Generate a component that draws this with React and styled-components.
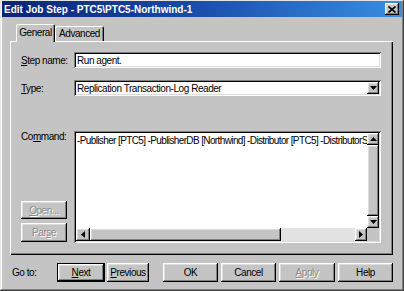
import styled, { createGlobalStyle } from "styled-components";

const Global = createGlobalStyle`
  html, body { margin: 0; padding: 0; background: #c4c4c4; }
  body { font-family: "Liberation Sans", Arial, sans-serif; }
`;

const face = "#c4c4c4";

const raised = `
  box-shadow: inset -1px -1px #000, inset 1px 1px #fff, inset -2px -2px #808080, inset 2px 2px #dcdcdc;
`;
const sunken = `
  box-shadow: inset 1px 1px #808080, inset -1px -1px #fff, inset 2px 2px #000, inset -2px -2px #dcdcdc;
`;

const Window = styled.div`
  width: 404px;
  height: 291px;
  box-sizing: border-box;
  padding: 1px 2px 2px 2px;
  background: ${face};
  box-shadow: inset -1px -1px #404040, inset 1px 1px #e4e4e4, inset -2px -2px #808080, inset 2px 2px #fff;
  display: flex;
  flex-direction: column;
  font-family: "Liberation Sans", Arial, sans-serif;
  font-size: 10px;
  letter-spacing: -0.45px;
  color: #000;
`;

const TitleBar = styled.div`
  height: 16px;
  display: flex;
  align-items: center;
  padding: 0 3px 0 2px;
  background: linear-gradient(90deg, #0a2470 0%, #1749a6 45%, #3a8ee2 100%);
  color: #fff;
  font-weight: bold;
  font-size: 10px;
  letter-spacing: 0;
  white-space: nowrap;
`;

const CloseBtn = styled.div`
  margin-left: auto;
  width: 14px;
  height: 12px;
  background: ${face};
  ${raised}
  display: flex;
  align-items: center;
  justify-content: center;
`;

const Body = styled.div`
  flex: 1;
  display: flex;
  flex-direction: column;
  padding: 7px 9px 0 8px;
`;

const TabRow = styled.div`
  height: 17px;
  display: flex;
  align-items: flex-end;
  padding-left: 6px;
`;

const Tab = styled.div`
  position: relative;
  z-index: 1;
  box-sizing: border-box;
  width: ${(p) => p.$w}px;
  height: ${(p) => (p.$active ? 18 : 15)}px;
  margin-bottom: ${(p) => (p.$active ? -1 : 0)}px;
  padding-top: ${(p) => (p.$active ? 3 : 2)}px;
  text-align: center;
  background: ${face};
  border-radius: 2px 2px 0 0;
  box-shadow: inset 1px 1px #fff, inset -1px 0 #000, inset -2px 0 #808080;
`;

const Panel = styled.div`
  height: 214px;
  box-sizing: border-box;
  padding: 11px 12px 12px 11px;
  box-shadow: inset 1px 1px #fff, inset -1px -1px #000, inset -2px -2px #808080;
  display: flex;
  flex-direction: column;
`;

const Row = styled.div`
  display: flex;
  margin-top: ${(p) => p.$gap || 0}px;
  height: ${(p) => p.$h}px;
`;

const LabelCol = styled.div`
  width: 53px;
  flex: none;
  display: flex;
  flex-direction: column;
  justify-content: ${(p) => (p.$top ? "flex-start" : "center")};
  padding-top: 0;
`;

const U = styled.span`
  text-decoration: underline;
`;

const Field = styled.div`
  width: 307px;
  box-sizing: border-box;
  background: #fff;
  ${sunken}
  padding: 2px 2px 2px 3px;
  display: flex;
  align-items: center;
  white-space: nowrap;
`;

const DropBtn = styled.div`
  margin-left: auto;
  width: 12px;
  height: 12px;
  background: ${face};
  ${raised}
  display: flex;
  align-items: center;
  justify-content: center;
`;

const CommandBox = styled.div`
  width: 307px;
  box-sizing: border-box;
  ${sunken}
  background: #fff;
  padding: 2px;
  display: grid;
  grid-template-columns: 1fr 12px;
  grid-template-rows: 1fr 13px;
`;

const CommandText = styled.div`
  padding: 2px 0 0 1px;
  white-space: nowrap;
  overflow: hidden;
  letter-spacing: -0.62px;
`;

const VScroll = styled.div`
  display: flex;
  flex-direction: column;
`;

const ScrollBtn = styled.div`
  width: ${(p) => p.$w || 12}px;
  height: ${(p) => p.$h || 12}px;
  flex: none;
  background: ${face};
  ${raised}
  display: flex;
  align-items: center;
  justify-content: center;
`;

const Thumb = styled.div`
  flex: ${(p) => p.$grow || 1};
  background: ${face};
  ${raised}
`;

const Track = styled.div`
  flex: ${(p) => p.$grow || 1};
  background: #e2e2e2;
`;

const HScroll = styled.div`
  display: flex;
`;

const Corner = styled.div`
  background: ${face};
`;

const SideButtons = styled.div`
  margin-top: auto;
  display: flex;
  flex-direction: column;
  gap: 4px;
  padding-bottom: 1px;
`;

const Button = styled.div`
  box-sizing: border-box;
  width: ${(p) => p.$w}px;
  height: ${(p) => p.$h || 19}px;
  background: ${face};
  ${raised}
  ${(p) => (p.$default ? "border: 1px solid #000;" : "")}
  display: flex;
  align-items: center;
  justify-content: center;
  color: ${(p) => (p.$disabled ? "#8a8a8a" : "#000")};
  text-shadow: ${(p) => (p.$disabled ? "1px 1px #fff" : "none")};
`;

const BottomBar = styled.div`
  display: flex;
  align-items: center;
  margin-top: 8px;
  height: 19px;
`;

const GoTo = styled.div`
  width: 45px;
  padding-left: 2px;
`;

const Group = styled.div`
  display: flex;
  gap: ${(p) => p.$gap}px;
  margin-left: ${(p) => (p.$right ? "auto" : "0")};
`;

const Arrow = ({ dir }) => {
  const pts = {
    down: "0,0 7,0 3.5,4",
    up: "0,4 7,4 3.5,0",
    left: "4,0 4,7 0,3.5",
    right: "0,0 0,7 4,3.5",
  }[dir];
  const vertical = dir === "down" || dir === "up";
  return (
    <svg width={vertical ? 7 : 4} height={vertical ? 4 : 7}>
      <polygon points={pts} fill="#000" />
    </svg>
  );
};

export default function App() {
  return (
    <>
      <Global />
      <Window>
        <TitleBar>
          Edit Job Step - PTC5\PTC5-Northwind-1
          <CloseBtn>
            <svg width="8" height="7" viewBox="0 0 8 7">
              <path d="M0.5 0.5 L7.5 6.5 M7.5 0.5 L0.5 6.5" stroke="#000" strokeWidth="1.6" />
            </svg>
          </CloseBtn>
        </TitleBar>
        <Body>
          <TabRow>
            <Tab $active $w={39}>General</Tab>
            <Tab $w={49}>Advanced</Tab>
          </TabRow>
          <Panel>
            <Row $h={16}>
              <LabelCol>
                <span><U>S</U>tep name:</span>
              </LabelCol>
              <Field>Run agent.</Field>
            </Row>
            <Row $h={16} $gap={12}>
              <LabelCol>
                <span><U>T</U>ype:</span>
              </LabelCol>
              <Field>
                Replication Transaction-Log Reader
                <DropBtn>
                  <Arrow dir="down" />
                </DropBtn>
              </Field>
            </Row>
            <Row $h={112} $gap={35}>
              <LabelCol $top>
                <span>Co<U>m</U>mand:</span>
                <SideButtons>
                  <Button $w={46} $h={18} $disabled>
                    <span><U>O</U>pen...</span>
                  </Button>
                  <Button $w={46} $h={19} $disabled>
                    <span>Par<U>s</U>e</span>
                  </Button>
                </SideButtons>
              </LabelCol>
              <CommandBox>
                <CommandText>
                  -Publisher [PTC5] -PublisherDB [Northwind] -Distributor [PTC5] -DistributorS
                </CommandText>
                <VScroll>
                  <ScrollBtn>
                    <Arrow dir="up" />
                  </ScrollBtn>
                  <Thumb />
                  <ScrollBtn>
                    <Arrow dir="down" />
                  </ScrollBtn>
                </VScroll>
                <HScroll>
                  <ScrollBtn $w={14} $h={13}>
                    <Arrow dir="left" />
                  </ScrollBtn>
                  <Thumb $grow={191} />
                  <Track $grow={74} />
                  <ScrollBtn $w={12} $h={13}>
                    <Arrow dir="right" />
                  </ScrollBtn>
                </HScroll>
                <Corner />
              </CommandBox>
            </Row>
          </Panel>
          <BottomBar>
            <GoTo>Go to:</GoTo>
            <Group $gap={2}>
              <Button $w={48} $default>
                <span><U>N</U>ext</span>
              </Button>
              <Button $w={42}>
                <span><U>P</U>revious</span>
              </Button>
            </Group>
            <Group $right $gap={3}>
              <Button $w={55}>OK</Button>
              <Button $w={55}>Cancel</Button>
              <Button $w={56} $disabled>
                <span><U>A</U>pply</span>
              </Button>
              <Button $w={55}>Help</Button>
            </Group>
          </BottomBar>
        </Body>
      </Window>
    </>
  );
}
